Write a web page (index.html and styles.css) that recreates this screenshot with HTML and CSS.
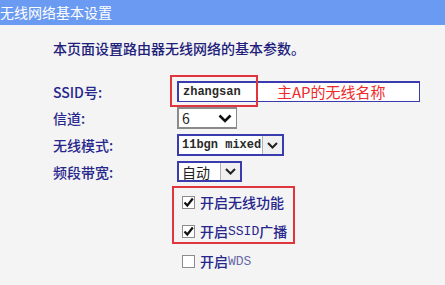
FILE: index.html
```html
<!DOCTYPE html>
<html lang="zh-CN">
<head>
    <meta charset="UTF-8">
    <title>无线网络基本设置</title>
    <link rel="stylesheet" href="styles.css">
</head>
<body>
    <div class="title-bar">无线网络基本设置</div>

    <div class="content">
        <p class="intro">本页面设置路由器无线网络的基本参数。</p>

        <div class="form-grid">
            <label class="field-label">SSID号:</label>
            <div class="text-box">
                <span class="mono">zhangsan</span>
                <!-- 标注 -->
                <span class="mark-box"></span>
                <span class="mark-text">主AP的无线名称</span>
            </div>

            <label class="field-label">信道:</label>
            <div class="select select-channel">
                <span class="select-value">6</span>
                <span class="arrow plain">
                    <svg width="14" height="9" viewBox="0 0 14 9"><path d="M1.5 1.5 L7 7 L12.5 1.5" fill="none" stroke="#111" stroke-width="2.6"/></svg>
                </span>
            </div>

            <label class="field-label">无线模式:</label>
            <div class="select select-mode">
                <span class="select-value mono">11bgn mixed</span>
                <span class="arrow">
                    <svg width="11" height="7" viewBox="0 0 11 7"><path d="M1 1 L5.5 5.5 L10 1" fill="none" stroke="#222" stroke-width="2"/></svg>
                </span>
            </div>

            <label class="field-label">频段带宽:</label>
            <div class="select select-band">
                <span class="select-value">自动</span>
                <span class="arrow">
                    <svg width="11" height="7" viewBox="0 0 11 7"><path d="M1 1 L5.5 5.5 L10 1" fill="none" stroke="#222" stroke-width="2"/></svg>
                </span>
            </div>
        </div>

        <div class="checks">
            <div class="check-group">
                <div class="check-row">
                    <span class="checkbox">
                        <svg width="11" height="11" viewBox="0 0 11 11"><path d="M1.5 5.5 L4.3 8.5 L9.8 1.5" fill="none" stroke="#111" stroke-width="2.2"/></svg>
                    </span>
                    开启无线功能
                </div>
                <div class="check-row">
                    <span class="checkbox">
                        <svg width="11" height="11" viewBox="0 0 11 11"><path d="M1.5 5.5 L4.3 8.5 L9.8 1.5" fill="none" stroke="#111" stroke-width="2.2"/></svg>
                    </span>
                    开启<span class="mono-label">SSID</span>广播
                </div>
            </div>
            <div class="check-row single">
                <span class="checkbox"></span>
                开启<span class="mono-label light">WDS</span>
            </div>
        </div>
    </div>
</body>
</html>
```

FILE: styles.css
```css
body {
    margin: 0;
    background-color: #f4f4f4;
    font-family: "Noto Sans CJK SC", "DejaVu Sans", sans-serif;
    font-size: 14px;
    color: #23238a;
}
.title-bar {
    height: 25px;
    line-height: 25px;
    background-color: #6b9af2;
    color: #fff;
    font-size: 14px;
}
.content {
    padding-left: 53px;
}
.intro {
    margin: 13px 0 0 0;
    line-height: 20px;
    font-weight: 500;
    color: #20207a;
}
.form-grid {
    display: grid;
    grid-template-columns: 124px auto;
    grid-template-rows: 21px 22px 22px 21px;
    row-gap: 5px;
    margin-top: 23px;
    align-items: center;
}
.field-label {
    font-weight: 500;
    color: #26268c;
    line-height: 20px;
}
.mono {
    font-family: "Liberation Mono", monospace;
    font-size: 12px;
    font-weight: bold;
    color: #2a2a2a;
}
.text-box {
    position: relative;
    box-sizing: border-box;
    width: 243px;
    height: 21px;
    border: 2px solid #3b3bb0;
    border-width: 2px 1px 1px 2px;
    background: #fff;
    display: flex;
    align-items: center;
    padding-left: 4px;
}
.mark-box {
    position: absolute;
    left: -9px;
    top: -8px;
    width: 84px;
    height: 28px;
    border: 2px solid #e0353d;
}
.mark-text {
    position: absolute;
    left: 98px;
    top: 0;
    line-height: 18px;
    font-size: 15px;
    color: #ee2a2a;
}
.select {
    box-sizing: border-box;
    height: 100%;
    border: 2px solid #3b3bb0;
    background: #fff;
    display: flex;
    align-items: center;
    justify-self: start;
}
.select-value {
    padding-left: 3px;
    flex: 1;
    line-height: 18px;
}
.select-channel {
    width: 60px;
    border-color: #8a8a8a;
    border-width: 2px 1px 2px 2px;
    color: #222;
}
.arrow {
    box-sizing: border-box;
    height: 100%;
    width: 20px;
    display: flex;
    align-items: center;
    justify-content: center;
    background: #f0f0f0;
    border-left: 1px solid #b0b0b0;
}
.arrow.plain {
    background: none;
    border: none;
    width: 22px;
}
.select-mode {
    width: 107px;
}
.select-band {
    width: 65px;
    color: #222;
}
.checks {
    padding-left: 119px;
    margin-top: 4px;
}
.check-group {
    width: 123px;
    box-sizing: border-box;
    border: 2px solid #e0353d;
    padding: 4px 0 1px 8px;
}
.check-row {
    display: flex;
    align-items: center;
    height: 20px;
    font-weight: 500;
    color: #26268c;
    white-space: nowrap;
}
.check-group .check-row + .check-row {
    margin-top: 9px;
}
.check-row.single {
    margin-top: 7px;
    padding-left: 10px;
}
.checkbox {
    box-sizing: border-box;
    width: 13px;
    height: 13px;
    border: 1px solid #8c8c8c;
    background: #fff;
    margin-right: 5px;
    display: flex;
    align-items: center;
    justify-content: center;
}
.mono-label {
    font-family: "Liberation Mono", monospace;
    font-size: 13px;
    font-weight: normal;
}
.mono-label.light {
    color: #6a6aa8;
}
```
